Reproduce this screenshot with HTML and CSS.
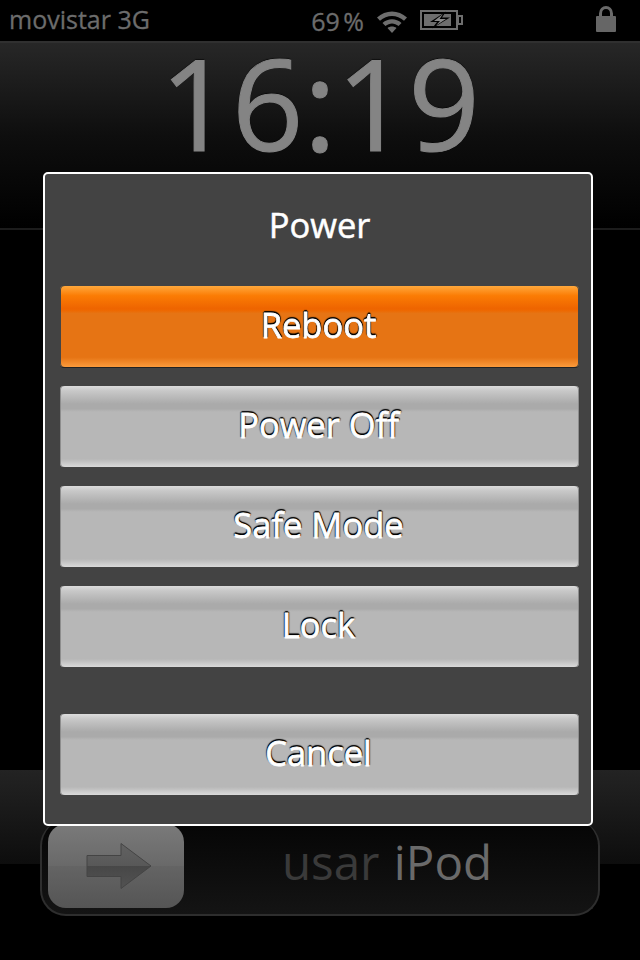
FILE: index.html
```html
<!DOCTYPE html>
<html lang="en">

<head>
    <meta charset="UTF-8">
    <meta name="viewport" content="width=device-width, initial-scale=1.0">
    <title>Power</title>
    <link rel="stylesheet" href="styles.css">
</head>

<body>
    <div class="screen">
        <header class="status-bar">
            <span class="carrier">movistar 3G</span>
            <div class="status-mid">
                <span class="battery-pct">69 %</span>
                <svg class="wifi" width="32" height="24" viewBox="0 0 32 24">
                    <path d="M1 8.500C9.500 0.500 22.500 0.500 31 8.500L28 11.800C21 5.500 11 5.500 4 11.800Z" fill="#6e6e6e" />
                    <path d="M6.500 14C12 9 20 9 25.500 14L22.500 17C18.500 13.500 13.500 13.500 9.500 17Z" fill="#6e6e6e" />
                    <path d="M11.500 19C14 17 18 17 20.500 19L16 24Z" fill="#6e6e6e" />
                </svg>
                <svg class="battery" width="44" height="22" viewBox="0 0 44 22">
                    <rect x="1" y="1" width="36" height="18" fill="none" stroke="#6e6e6e" stroke-width="2" />
                    <rect x="4" y="4" width="27" height="12" fill="#6e6e6e" />
                    <rect x="38" y="6" width="4" height="8" fill="none" stroke="#6e6e6e" stroke-width="2" />
                    <path d="M26 1.500L10 12H17L12 18.500L30 7.500H22Z" fill="#000" />
                    <path d="M23 4L14 11H20L16 15.500L26 9H19.500Z" fill="#8a8a8a" />
                </svg>
            </div>
            <svg class="lock" width="20" height="27" viewBox="0 0 20 27">
                <path d="M4.500 12V7.500C4.500 -0.500 15.500 -0.500 15.500 7.500V12" fill="none" stroke="#6a6a6a" stroke-width="3" />
                <rect x="0" y="10" width="20" height="16" rx="1" fill="#666" />
            </svg>
        </header>
        <section class="clock-panel">
            <div class="clock">16:19</div>
        </section>
        <div class="spacer"></div>
        <section class="slide-panel">
            <div class="slider">
                <div class="slider-thumb">
                    <svg width="66" height="48" viewBox="0 0 66 48">
                        <defs>
                            <linearGradient id="arrowFill" x1="0" y1="0" x2="0" y2="1">
                                <stop offset="0" stop-color="#626262" />
                                <stop offset="0.5" stop-color="#585858" />
                                <stop offset="0.5" stop-color="#474747" />
                                <stop offset="1" stop-color="#525252" />
                            </linearGradient>
                        </defs>
                        <path d="M1 13.500H35V1.500L65 24L35 46.500V34.500H1Z" fill="url(#arrowFill)" stroke="#444" stroke-width="1" />
                    </svg>
                </div>
                <div class="slider-label"><span class="dim">usar</span> <span class="bright">iPod</span></div>
            </div>
        </section>
    </div>

    <div class="dialog">
        <h1 class="dialog-title">Power</h1>
        <div class="btn-list">
            <button class="btn btn-orange">Reboot</button>
            <button class="btn">Power Off</button>
            <button class="btn">Safe Mode</button>
            <button class="btn">Lock</button>
            <button class="btn btn-cancel">Cancel</button>
        </div>
    </div>
</body>

</html>
```

FILE: styles.css
```css
* {
    box-sizing: border-box;
}

html,
body {
    margin: 0;
    height: 960px;
    overflow: hidden;
    background-color: #000;
    font-family: "Open Sans", "Noto Sans", sans-serif;
}

body {
    position: relative;
}

.screen {
    display: flex;
    flex-direction: column;
    width: 640px;
    height: 960px;
}

.status-bar {
    display: flex;
    align-items: center;
    height: 41px;
    padding: 0 24px 0 9px;
    background-color: #000;
    flex-shrink: 0;
}

.carrier {
    font-size: 25px;
    line-height: 39px;
    margin-bottom: 2px;
    color: #6c6c6c;
    -webkit-text-stroke: 0.3px #6c6c6c;
}

.status-mid {
    display: flex;
    align-items: center;
    margin-left: auto;
    margin-right: 132px;
    gap: 12px;
}

.battery-pct {
    font-size: 25px;
    color: #6c6c6c;
    word-spacing: -3px;
    -webkit-text-stroke: 0.3px #6c6c6c;
}

.battery {
    margin-top: 1px;
}

.lock {
    margin-top: -2px;
}

.clock-panel {
    height: 189px;
    border-top: 2px solid #303030;
    border-bottom: 2px solid #1c1c1c;
    background: linear-gradient(#272727, #0e0e0e 50%, #000 100%);
    text-align: center;
}

.clock {
    font-size: 125.5px;
    line-height: 120px;
    color: #848484;
    -webkit-text-stroke: 1px #848484;
    text-shadow: 0 -1px 1px #000;
}

.spacer {
    height: 540px;
}

.slide-panel {
    height: 94px;
    background: linear-gradient(#232323, #0d0d0d);
}

.slider {
    display: flex;
    align-items: center;
    width: 560px;
    height: 96px;
    margin: 50px 0 0 40px;
    padding: 6px 6px 8px;
    position: relative;
    background: linear-gradient(#050505, #141414);
    border: 2px solid #2e2e2e;
    border-top: none;
    border-radius: 26px;
}

.slider-thumb {
    display: flex;
    align-items: center;
    justify-content: center;
    flex-shrink: 0;
    width: 136px;
    height: 84px;
    padding-left: 6px;
    border-radius: 18px;
    background: linear-gradient(#7a7a7a, #696969 50%, #646464 50%, #555);
}

.slider-label {
    flex: 1;
    font-size: 47.5px;
    text-align: center;
    word-spacing: 2px;
    padding-right: 2px;
    margin-top: -10px;
}

.slider-label .dim {
    color: #3a3a3a;
}

.slider-label .bright {
    color: #6a6a6a;
}

.dialog {
    position: absolute;
    left: 43px;
    top: 172px;
    width: 550px;
    height: 654px;
    padding: 0 15px;
    background-color: #434343;
    border: 2px solid #fff;
    border-radius: 5px;
}

.dialog-title {
    margin: 0;
    height: 112px;
    padding-left: 3px;
    font-size: 34.5px;
    font-weight: 400;
    line-height: 102px;
    text-align: center;
    color: #fff;
    -webkit-text-stroke: 0.5px #fff;
}

.btn-list {
    display: flex;
    flex-direction: column;
    gap: 19px;
}

.btn {
    display: block;
    width: 519px;
    height: 81px;
    padding: 0 2px 5px 0;
    font-family: inherit;
    font-size: 34.5px;
    color: #fff;
    border: none;
    border-radius: 4px;
    transform: translateZ(0);
    -webkit-text-stroke: 0.8px #fff;
    text-shadow: 0 -2px 1px #000, -1px -1px 1px #000, 1px -1px 1px #000;
    background: linear-gradient(#dcdcdc 0, #c8c8c8 6%, #aaa 22%, #aaa 28%, #b7b7b7 32%, #b7b7b7 90%, #dadada 100%);
    box-shadow: inset 1px 0 0 #8d8d8d, inset -1px 0 0 #8d8d8d;
}

.btn-orange {
    background: linear-gradient(#ffa83c 0, #fb7c04 12%, #ee6400 28%, #ee6800 30%, #e67414 34%, #e67414 88%, #fb9b3c 100%);
    box-shadow: inset 1px 0 0 #444, inset -1px 0 0 #444, 0 1px 0 #222;
}

.btn-cancel {
    margin-top: 28px;
}
```
